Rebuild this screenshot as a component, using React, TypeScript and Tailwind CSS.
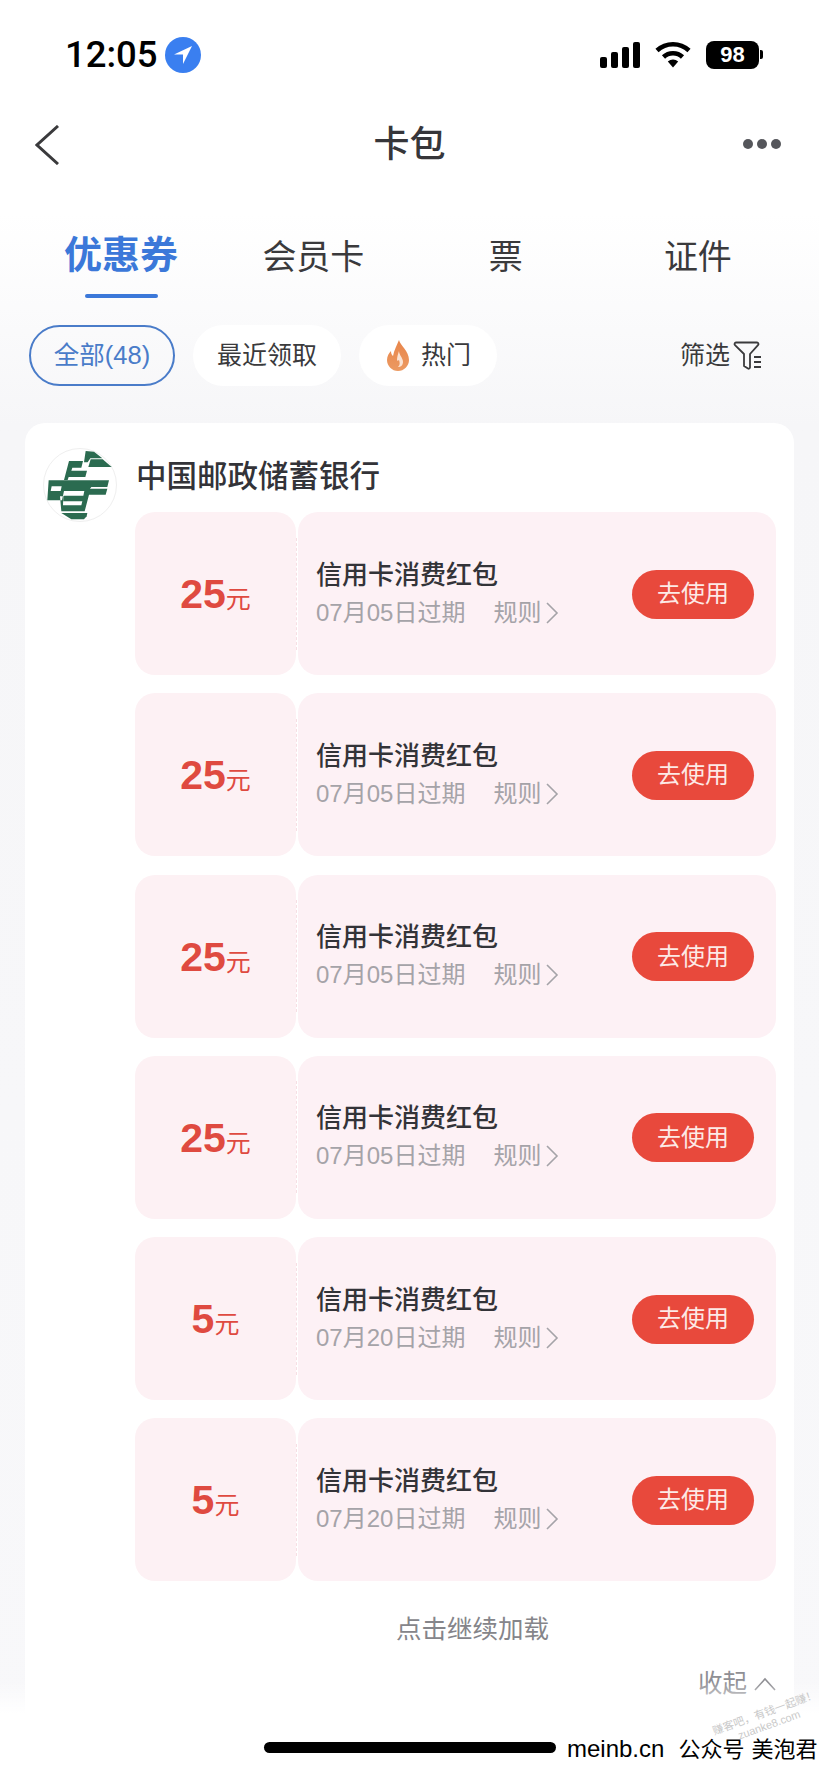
const coupons = [
    { amount: '25', expires: '07月05日过期' },
    { amount: '25', expires: '07月05日过期' },
    { amount: '25', expires: '07月05日过期' },
    { amount: '25', expires: '07月05日过期' },
    { amount: '5', expires: '07月20日过期' },
    { amount: '5', expires: '07月20日过期' },
];

const cjk = "font-['Liberation_Sans','Noto_Sans_CJK_SC',sans-serif]";

function StatusIcons() {
    return (
        <div className="flex items-center h-[37px]">
            {/* Signal */}
            <div className="flex items-end gap-[4px] h-[26px]">
                <div className="w-[7px] h-[11px] rounded-[2px] bg-black"></div>
                <div className="w-[7px] h-[16px] rounded-[2px] bg-black"></div>
                <div className="w-[7px] h-[21px] rounded-[2px] bg-black"></div>
                <div className="w-[7px] h-[26px] rounded-[2px] bg-black"></div>
            </div>
            {/* Wifi */}
            <svg width="36" height="27" viewBox="0 0 36 27" className="ml-[15px]">
                <path d="M2 9.5C11 1.2 25 1.2 34 9.5" fill="none" stroke="black" strokeWidth="4.6" />
                <path d="M8.5 16C13.8 11 22.2 11 27.5 16" fill="none" stroke="black" strokeWidth="4.6" />
                <path d="M12.8 20.6C15.8 17.8 20.2 17.8 23.2 20.6L18 26.5Z" fill="black" />
            </svg>
            {/* Battery */}
            <div className="ml-[15px] w-[53px] h-[28px] rounded-[8px] bg-black flex items-center justify-center text-white text-[22px] font-semibold font-['Liberation_Sans',sans-serif]">
                98
            </div>
            <div className="ml-[1px] w-[3px] h-[9px] rounded-r-[2px] bg-black"></div>
        </div>
    );
}

function PostalLogo() {
    return (
        <div className="w-[74px] h-[74px] rounded-full border border-[#efefef] bg-white flex-none">
            <svg width="72" height="72" viewBox="10 14 216 216">
                <g fill="#2b6b50">
                    <path d="M135 20l25 2 25 20h-36l-8 12h-11z" />
                    <path d="M150 45h36l27 23h-70z" />
                    <path d="M85 50h42l-5 20H95l-3 9h47l-5 19H84l-3 9H70l15-57z" />
                    <path fillRule="evenodd" d="M24 108h181l-5 20h-48l-4 5h52l-5 18h-50l-13 50H62l-4-45h10l-1 27h55l3-12H68l1-17h59l3-14H70l-6 28H20zM33 126l-3 14h30l3-14z" />
                    <path d="M62 206h78l-2 10-8 9H92z" />
                </g>
            </svg>
        </div>
    );
}

function CouponRow({ amount, expires }: { amount: string; expires: string }) {
    return (
        <div className="flex h-[163px]">
            <div className="w-[161px] flex-none rounded-[20px] bg-[#fdf1f4] flex items-baseline justify-center pt-[59px] text-[#df4a40]">
                <span className="text-[41px] leading-[46px] font-bold font-['Liberation_Sans',sans-serif]">{amount}</span>
                <span className={`text-[25px] leading-[46px] ${cjk}`}>元</span>
            </div>
            <div className="w-[2px] flex-none flex items-center">
                <div className="h-[112px] w-0 border-l border-dashed border-[#f7dfe4]"></div>
            </div>
            <div className="flex-1 rounded-[20px] bg-[#fdf1f5] flex items-center pl-[18px] pr-[22px]">
                <div className="flex-1">
                    <div className={`text-[26px] leading-[36px] font-medium text-[#333338] ${cjk}`}>信用卡消费红包</div>
                    <div className={`mt-[2px] flex items-center text-[24px] leading-[36px] text-[#a5a3a8] ${cjk}`}>
                        <span>{expires}</span>
                        <span className="ml-[28px]">规则</span>
                        <svg width="14" height="24" viewBox="0 0 14 24" className="ml-[4px]">
                            <path d="M2 2l10 10L2 22" fill="none" stroke="#a5a3a8" strokeWidth="1.6" />
                        </svg>
                    </div>
                </div>
                <div className={`w-[122px] h-[49px] mt-[1px] rounded-full bg-[#e8493c] flex items-center justify-center text-[24px] text-[#fdeae6] ${cjk}`}>
                    去使用
                </div>
            </div>
        </div>
    );
}

export default function App() {
    return (
        <div className={`relative w-[819px] h-[1772px] overflow-hidden bg-gradient-to-b from-white from-[12%] via-[#f6f6f8] via-[24%] to-[#f8f8fa] ${cjk}`}>
            {/* Status bar */}
            <div className="h-[73px] pt-[36px] pl-[65px] pr-[56px] flex items-start justify-between">
                <div className="flex items-center h-[37px]">
                    <span className="text-[36.5px] leading-[37px] font-medium text-black font-['Roboto',sans-serif]">12:05</span>
                    <div className="ml-[7px] w-[36px] h-[36px] rounded-full bg-[#3a7ff0] flex items-center justify-center">
                        <svg width="22" height="22" viewBox="0 0 22 22">
                            <path d="M20 2 2 10.5h9V20Z" fill="white" />
                        </svg>
                    </div>
                </div>
                <StatusIcons />
            </div>

            {/* Nav bar */}
            <div className="h-[142px] px-[35px] pt-[52px] grid grid-cols-3 items-start">
                <svg width="24" height="40" viewBox="0 0 24 40">
                    <path d="M23 1 2 20l21 19" fill="none" stroke="#3a3a3c" strokeWidth="3" />
                </svg>
                <div className="text-center text-[36px] leading-[40px] font-medium text-[#36363a]">卡包</div>
                <div className="flex justify-end gap-[4px] pt-[14px] pr-[3px]">
                    <div className="w-[10px] h-[10px] rounded-full bg-[#55565b]"></div>
                    <div className="w-[10px] h-[10px] rounded-full bg-[#55565b]"></div>
                    <div className="w-[10px] h-[10px] rounded-full bg-[#55565b]"></div>
                </div>
            </div>

            {/* Tabs */}
            <div className="mt-[17px] h-[66px] px-[25px] grid grid-cols-4">
                <div className="flex flex-col items-center">
                    <div className="text-[38px] leading-[46px] font-semibold text-[#3b78d9]">优惠券</div>
                    <div className="mt-[16px] w-[73px] h-[4px] rounded-full bg-[#3b78d9]"></div>
                </div>
                <div className="pt-[2px] text-center text-[34px] leading-[46px] text-[#3a3a3c]">会员卡</div>
                <div className="pt-[2px] text-center text-[34px] leading-[46px] text-[#3a3a3c]">票</div>
                <div className="pt-[2px] text-center text-[34px] leading-[46px] text-[#3a3a3c]">证件</div>
            </div>

            {/* Filters */}
            <div className="mt-[27px] h-[61px] pl-[29px] pr-[58px] flex items-center gap-[18px]">
                <div className="w-[146px] h-[61px] rounded-full border-2 border-[#4a7cc9] flex items-center justify-center text-[25.5px] text-[#4a7cc9]">全部(48)</div>
                <div className="w-[148px] h-[61px] rounded-full bg-white flex items-center justify-center text-[25px] text-[#3a3a3c]">最近领取</div>
                <div className="w-[138px] h-[61px] rounded-full bg-white flex items-center justify-center gap-[11px] pl-[1px] text-[25px] text-[#3a3a3c]">
                    <svg width="24" height="31" viewBox="0 0 24 31">
                        <defs>
                            <linearGradient id="flame" x1="0" y1="0" x2="0" y2="1">
                                <stop offset="0" stopColor="#e8854a" />
                                <stop offset="1" stopColor="#ec9a62" />
                            </linearGradient>
                        </defs>
                        <path d="M13 0c1 5 10 11 10 20 0 6-5 11-11 11S1 26 1 20c0-4 2-7 4-9 0 3 1 4 2 5C8 10 11 5 13 0Z" fill="url(#flame)" />
                        <path d="M13 11c0 4 4 7 4 11 0 3-2 5-5 5 2-2 2-4 1-7-1 1-2 1-2 0 0-3 1-6 2-9Z" fill="#fbe3d3" />
                    </svg>
                    <span>热门</span>
                </div>
                <div className="ml-auto flex items-center gap-[3px] text-[25px] text-[#3a3a3c]">
                    <span>筛选</span>
                    <svg width="28" height="30" viewBox="0 0 28 30">
                        <path d="M3 1.5h21a1.5 1.5 0 0 1 1 2.6L17 13v13.5a1.3 1.3 0 0 1-2 1l-4-2.5V13L2 4.1a1.5 1.5 0 0 1 1-2.6Z" fill="none" stroke="#3a3a3c" strokeWidth="1.8" strokeLinejoin="round" />
                        <path d="M21 16h7M21 21h7M21 26h7" stroke="#3a3a3c" strokeWidth="1.8" />
                    </svg>
                </div>
            </div>

            {/* Bank card */}
            <div className="mt-[37px] mx-[25px] h-[1320px] rounded-t-[20px] bg-white flex pl-[18px] pr-[18px] pt-[25px]">
                <PostalLogo />
                <div className="flex-1 ml-[18px]">
                    <div className="h-[64px] pl-[1px] text-[30.5px] leading-[56px] font-medium text-[#333338]">中国邮政储蓄银行</div>
                    <div className="flex flex-col gap-[18.3px]">
                        {coupons.map((coupon, i) => (
                            <CouponRow key={i} amount={coupon.amount} expires={coupon.expires} />
                        ))}
                    </div>
                    <div className="mt-[29px] pl-[34px] text-center text-[25.5px] leading-[38px] text-[#85858a]">点击继续加载</div>
                    <div className="mt-[18px] flex items-center justify-end text-[24.5px] leading-[36px] text-[#8f8f94]">
                        <span>收起</span>
                        <svg width="22" height="14" viewBox="0 0 22 14" className="ml-[7px]">
                            <path d="M1 13 11 2l10 11" fill="none" stroke="#8f8f94" strokeWidth="1.6" />
                        </svg>
                    </div>
                </div>
            </div>

            {/* Bottom fade, home bar and watermark */}
            <div className="absolute left-0 right-0 bottom-0 h-[90px] bg-gradient-to-b from-transparent to-white to-[35%]"></div>
            <div className="absolute left-[712px] top-[1706px] -rotate-[20deg] text-[11px] leading-[13px] text-[#c9c9c9] text-center whitespace-nowrap">
                <div>赚客吧，有钱一起赚！</div>
                <div className="font-['Liberation_Sans',sans-serif]">zuanke8.com</div>
            </div>
            <div className="absolute left-[264px] bottom-[5px] flex items-center">
                <div className="w-[292px] h-[11px] rounded-full bg-black"></div>
                <div className="ml-[11px] mt-[5px] text-[22px] leading-[34px] text-black whitespace-nowrap">
                    <span className="text-[24px] font-['Liberation_Sans',sans-serif]">meinb.cn</span>
                    <span className="ml-[14px]">公众号</span>
                    <span className="ml-[7px]">美泡君</span>
                </div>
            </div>
        </div>
    );
}
